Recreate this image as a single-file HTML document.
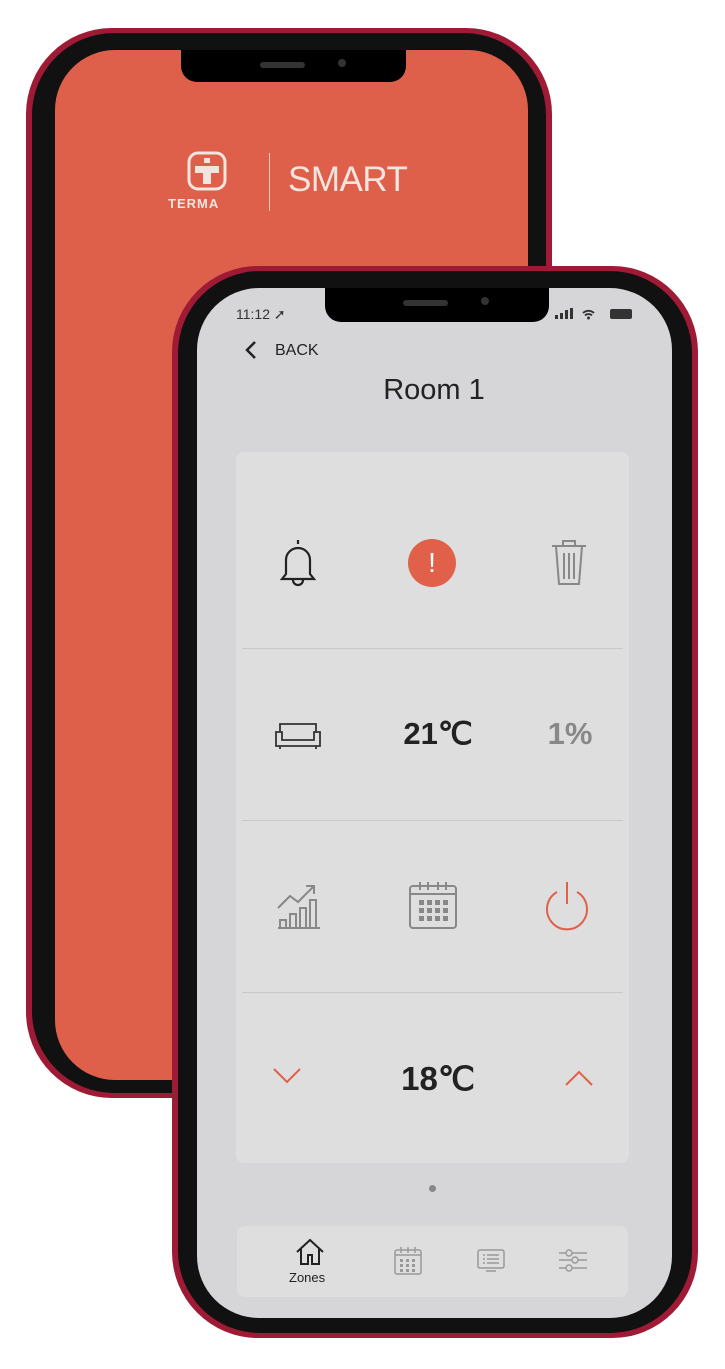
<!DOCTYPE html>
<html><head><meta charset="utf-8"><style>
*{margin:0;padding:0;box-sizing:border-box}
body{width:725px;height:1369px;background:#fff;position:relative;overflow:hidden;font-family:"Liberation Sans",sans-serif}
.abs{position:absolute}
</style></head><body>
<!-- back phone -->
<div class="abs" style="left:26px;top:28px;width:526px;height:1070px;border-radius:86px;background:#9e1a35;"></div>
<div class="abs" style="left:32px;top:33px;width:514px;height:1060px;border-radius:82px;background:#111;"></div>
<div class="abs" style="left:55px;top:50px;width:473px;height:1030px;border-radius:60px;background:#df604a;overflow:hidden">
 <div class="abs" style="left:126px;top:0;width:225px;height:32px;background:#000;border-radius:0 0 16px 16px"></div>
 <div class="abs" style="left:205px;top:12px;width:45px;height:6px;background:#333;border-radius:3px"></div>
 <div class="abs" style="left:283px;top:9px;width:8px;height:8px;background:#333;border-radius:50%"></div>
</div>
<svg class="abs" style="left:185px;top:150px" width="45" height="42" viewBox="0 0 45 42"><rect x="4" y="3" width="36" height="36" rx="9" fill="none" stroke="#f2e4df" stroke-width="3"/><path d="M10 16h24v7h-8v11h-8V23h-8z" fill="#f2e4df"/><rect x="19" y="8" width="6" height="5" fill="#f2e4df"/></svg>
<div class="abs" style="left:168px;top:196px;font-size:13px;font-weight:bold;color:#f2e4df;letter-spacing:1px">TERMA</div>
<div class="abs" style="left:269px;top:153px;width:1px;height:58px;background:#f0c8bd"></div>
<div class="abs" style="left:288px;top:160px;font-size:35px;color:#f2e4df;letter-spacing:-0.5px">SMART</div>
<!-- front phone -->
<div class="abs" style="left:172px;top:266px;width:526px;height:1072px;border-radius:86px;background:#9e1a35;"></div>
<div class="abs" style="left:178px;top:271px;width:514px;height:1062px;border-radius:82px;background:#111;"></div>
<div class="abs" style="left:197px;top:288px;width:475px;height:1030px;border-radius:62px;background:#d6d6d8;overflow:hidden">
 <div class="abs" style="left:128px;top:0;width:224px;height:34px;background:#000;border-radius:0 0 16px 16px"></div>
 <div class="abs" style="left:206px;top:12px;width:45px;height:6px;background:#333;border-radius:3px"></div>
 <div class="abs" style="left:284px;top:9px;width:8px;height:8px;background:#333;border-radius:50%"></div>
</div>
<div class="abs" style="left:236px;top:306px;font-size:14px;color:#333">11:12 ➚</div>
<svg class="abs" style="left:554px;top:307px" width="82" height="14"><rect x="1" y="8" width="3" height="4" fill="#333"/><rect x="6" y="6" width="3" height="6" fill="#333"/><rect x="11" y="3" width="3" height="9" fill="#333"/><rect x="16" y="1" width="3" height="11" fill="#333"/><path d="M29 6a8 8 0 0 1 11 0M31 8.5a5 5 0 0 1 7 0" stroke="#333" stroke-width="1.8" fill="none"/><circle cx="34.5" cy="11" r="1.5" fill="#333"/><rect x="56" y="2" width="22" height="10" rx="2" fill="#333"/></svg>
<svg class="abs" style="left:244px;top:340px" width="14" height="20"><path d="M11 2L3 10l8 8" stroke="#222" stroke-width="2.5" fill="none"/></svg>
<div class="abs" style="left:275px;top:342px;font-size:16px;color:#222">BACK</div>
<div class="abs" style="left:0;width:868px;top:374px;text-align:center;font-size:29px;color:#222">Room 1</div>
<!-- card -->
<div class="abs" style="left:236px;top:452px;width:393px;height:711px;background:#dedede;border-radius:8px"></div>
<div class="abs" style="left:242px;top:648px;width:381px;height:1px;background:#c8c8c8"></div>
<div class="abs" style="left:242px;top:820px;width:381px;height:1px;background:#c8c8c8"></div>
<div class="abs" style="left:242px;top:992px;width:381px;height:1px;background:#c8c8c8"></div>
<svg class="abs" style="left:276px;top:536px" width="44" height="52"><path d="M22 4v4M10 38V24a12 12 0 0 1 24 0v14l4 5H6z" stroke="#222" stroke-width="2.2" fill="none"/><path d="M17 44a5 5 0 0 0 10 0" stroke="#222" stroke-width="2.2" fill="none"/></svg>
<div class="abs" style="left:408px;top:539px;width:48px;height:48px;border-radius:50%;background:#e0604a;color:#fff;font-size:28px;text-align:center;line-height:48px">!</div>
<svg class="abs" style="left:549px;top:538px" width="40" height="50"><path d="M3 8h34M14 8V3h12v5M7 8l3 38h20l3-38M15 15v26M20 15v26M25 15v26" stroke="#888" stroke-width="2" fill="none"/></svg>
<svg class="abs" style="left:272px;top:720px" width="52" height="30"><path d="M8 12V4h36v8M4 12h6v8h32v-8h6v14H4zM8 26v3M44 26v3" stroke="#333" stroke-width="1.8" fill="none"/></svg>
<div class="abs" style="left:370px;width:136px;top:716px;text-align:center;font-size:31px;font-weight:bold;color:#222">21℃</div>
<div class="abs" style="left:520px;width:100px;top:716px;text-align:center;font-size:31px;font-weight:bold;color:#888">1%</div>
<svg class="abs" style="left:274px;top:878px" width="48" height="54"><path d="M4 30l12-12 8 6 16-16M32 8h8v8M4 50h42M6 50V42h6v8M16 50V36h6v14M26 50V30h6v20M36 50V22h6v28" stroke="#888" stroke-width="2" fill="none"/></svg>
<svg class="abs" style="left:408px;top:880px" width="50" height="50"><rect x="2" y="6" width="46" height="42" rx="3" stroke="#888" stroke-width="2" fill="none"/><path d="M2 14h46M12 2v8M20 2v8M30 2v8M38 2v8" stroke="#888" stroke-width="2"/><g fill="#888"><rect x="11" y="20" width="5" height="5"/><rect x="19" y="20" width="5" height="5"/><rect x="27" y="20" width="5" height="5"/><rect x="35" y="20" width="5" height="5"/><rect x="11" y="28" width="5" height="5"/><rect x="19" y="28" width="5" height="5"/><rect x="27" y="28" width="5" height="5"/><rect x="35" y="28" width="5" height="5"/><rect x="11" y="36" width="5" height="5"/><rect x="19" y="36" width="5" height="5"/><rect x="27" y="36" width="5" height="5"/><rect x="35" y="36" width="5" height="5"/></g></svg>
<svg class="abs" style="left:542px;top:880px" width="50" height="52"><path d="M15 12a20 20 0 1 0 20 0M25 2v22" stroke="#e0604a" stroke-width="2" fill="none"/></svg>
<svg class="abs" style="left:272px;top:1066px" width="30" height="20"><path d="M2 3l13 13 13-13" stroke="#e0604a" stroke-width="2" fill="none"/></svg>
<div class="abs" style="left:370px;width:136px;top:1059px;text-align:center;font-size:33px;font-weight:bold;color:#222">18℃</div>
<svg class="abs" style="left:564px;top:1068px" width="30" height="20"><path d="M2 17l13-13 13 13" stroke="#e0604a" stroke-width="2" fill="none"/></svg>
<div class="abs" style="left:429px;top:1185px;width:7px;height:7px;border-radius:50%;background:#888"></div>
<!-- nav -->
<div class="abs" style="left:237px;top:1226px;width:391px;height:71px;background:#dedede;border-radius:8px"></div>
<svg class="abs" style="left:295px;top:1237px" width="30" height="30"><path d="M2 15L15 3l13 12M6 12v15h7v-9h4v9h7V12" stroke="#222" stroke-width="2" fill="none"/></svg>
<div class="abs" style="left:289px;top:1270px;font-size:13px;color:#222">Zones</div>
<svg class="abs" style="left:393px;top:1246px" width="30" height="30"><rect x="2" y="4" width="26" height="24" rx="2" stroke="#999" stroke-width="1.5" fill="none"/><path d="M2 9h26M8 1v6M15 1v6M22 1v6" stroke="#999" stroke-width="1.5"/><g fill="#999"><rect x="7" y="13" width="3" height="3"/><rect x="13" y="13" width="3" height="3"/><rect x="19" y="13" width="3" height="3"/><rect x="7" y="18" width="3" height="3"/><rect x="13" y="18" width="3" height="3"/><rect x="19" y="18" width="3" height="3"/><rect x="7" y="23" width="3" height="3"/><rect x="13" y="23" width="3" height="3"/><rect x="19" y="23" width="3" height="3"/></g></svg>
<svg class="abs" style="left:476px;top:1248px" width="30" height="26"><rect x="2" y="2" width="26" height="18" rx="2" stroke="#999" stroke-width="1.5" fill="none"/><path d="M7 7h2M11 7h12M7 11h2M11 11h12M7 15h2M11 15h12M10 23h10" stroke="#999" stroke-width="1.6"/></svg>
<svg class="abs" style="left:558px;top:1248px" width="30" height="28"><path d="M1 5h28M1 12h28M1 20h28" stroke="#999" stroke-width="1.4"/><circle cx="11" cy="5" r="3" fill="#dedede" stroke="#999" stroke-width="1.4"/><circle cx="17" cy="12" r="3" fill="#dedede" stroke="#999" stroke-width="1.4"/><circle cx="11" cy="20" r="3" fill="#dedede" stroke="#999" stroke-width="1.4"/></svg>
</body></html>
